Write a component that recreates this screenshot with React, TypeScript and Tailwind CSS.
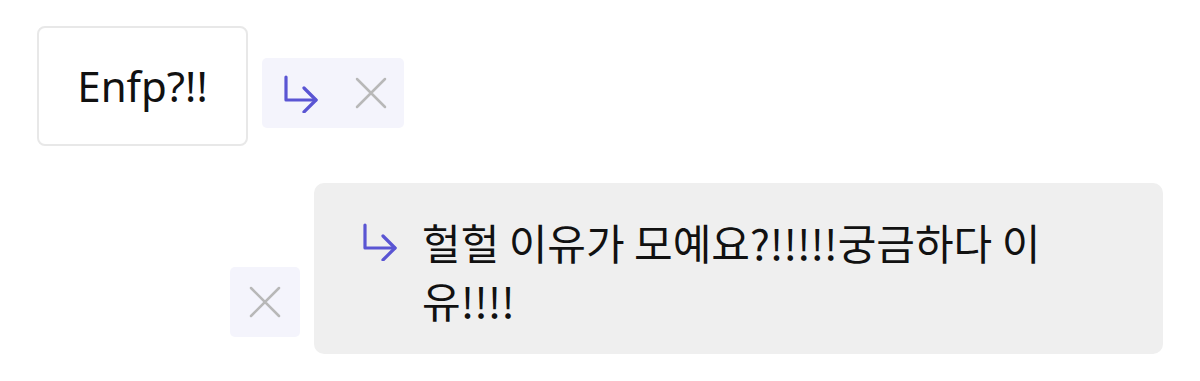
import React from "react";

const ReplyArrow = ({ className }: { className?: string }) => (
  <svg
    viewBox="0 0 36 38"
    width={36}
    height={38}
    fill="none"
    stroke="currentColor"
    strokeWidth={3.2}
    strokeLinecap="round"
    strokeLinejoin="round"
    className={className}
  >
    <path d="M3 2 V25 H33" />
    <path d="M21 13 L33 25 L21 37" />
  </svg>
);

const CloseIcon = ({ className }: { className?: string }) => (
  <svg
    viewBox="0 0 32 32"
    width={32}
    height={32}
    fill="none"
    stroke="currentColor"
    strokeWidth={2.5}
    strokeLinecap="round"
    className={className}
  >
    <path d="M2 2 L30 30 M30 2 L2 30" />
  </svg>
);

export default function App() {
  return (
    <div className="w-[1200px] h-[381px] bg-white px-[37px] pt-[26px] font-['Noto_Sans_CJK_KR',sans-serif] text-[#111]">
      <div className="flex items-start gap-[14px]">
        <div className="flex h-[120px] w-[211px] items-center justify-center rounded-[8px] border-2 border-[#e8e8e8] bg-white font-['Noto_Sans','Noto_Sans_CJK_KR',sans-serif] text-[42px] leading-none">
          Enfp?!!
        </div>
        <div className="mt-[32px] flex h-[70px] w-[142px] items-center rounded-[5px] bg-[#f4f4fc] pl-[21px]">
          <ReplyArrow className="text-[#5a55d3] mt-[1px]" />
          <CloseIcon className="ml-[36px] text-[#b8b8b8]" />
        </div>
      </div>

      <div className="mt-[37px] flex items-end justify-end gap-[14px]">
        <div className="mb-[17px] flex h-[70px] w-[70px] items-center justify-center rounded-[5px] bg-[#f4f4fc]">
          <CloseIcon className="text-[#b8b8b8]" />
        </div>
        <div className="flex h-[171px] w-[849px] items-start rounded-[10px] bg-[#efefef] pl-[48px] pr-[100px] pt-[30px]">
          <div className="flex h-[58px] w-[60px] shrink-0 items-center">
            <ReplyArrow className="text-[#5a55d3]" />
          </div>
          <p className="text-[42px] leading-[58px]">
            헐헐 이유가 모예요?!!!!!궁금하다 이유!!!!
          </p>
        </div>
      </div>
    </div>
  );
}
